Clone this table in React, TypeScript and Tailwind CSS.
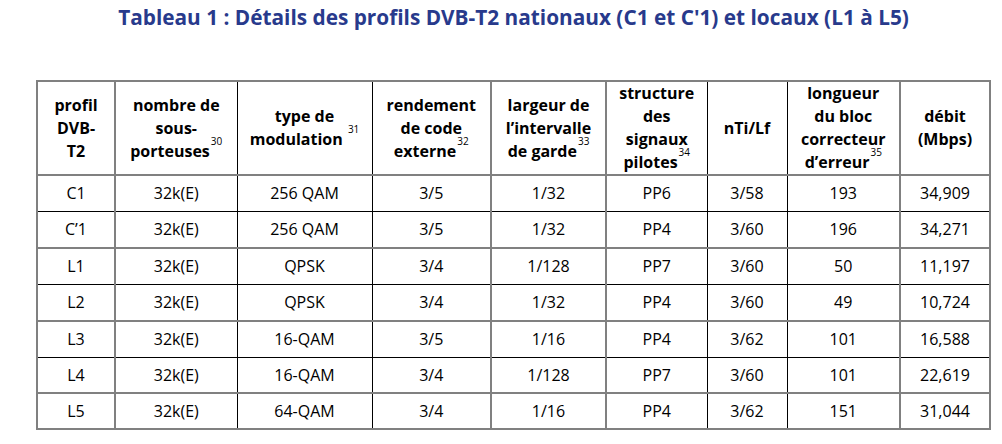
import React from "react";

type Row = string[];

const ROWS: Row[] = [
  ["C1", "32k(E)", "256 QAM", "3/5", "1/32", "PP6", "3/58", "193", "34,909"],
  ["C’1", "32k(E)", "256 QAM", "3/5", "1/32", "PP4", "3/60", "196", "34,271"],
  ["L1", "32k(E)", "QPSK", "3/4", "1/128", "PP7", "3/60", "50", "11,197"],
  ["L2", "32k(E)", "QPSK", "3/4", "1/32", "PP4", "3/60", "49", "10,724"],
  ["L3", "32k(E)", "16-QAM", "3/5", "1/16", "PP4", "3/62", "101", "16,588"],
  ["L4", "32k(E)", "16-QAM", "3/4", "1/128", "PP7", "3/60", "101", "22,619"],
  ["L5", "32k(E)", "64-QAM", "3/4", "1/16", "PP4", "3/62", "151", "31,044"],
];

// hauteur de chaque ligne (les lignes paires ont 1px de plus)
const HEIGHTS = ["h-[36px]", "h-[37px]", "h-[36px]", "h-[37px]", "h-[36px]", "h-[36px]", "h-[36px]"];

// bordures grises épaisses après ces colonnes, noires fines sinon
const RIGHT = [
  "border-r-2 border-r-[#808080]",
  "border-r border-r-black",
  "border-r border-r-black",
  "border-r-2 border-r-[#808080]",
  "border-r-2 border-r-[#808080]",
  "border-r border-r-black",
  "border-r border-r-black",
  "border-r-2 border-r-[#808080]",
  "border-r-2 border-r-[#808080]",
];

function Sup({ n }: { n: string }) {
  return <sup className="ml-[1px] align-[7px] text-[10px] font-normal leading-none">{n}</sup>;
}

const HEAD: React.ReactNode[] = [
  <>profil<br />DVB-<br />T2</>,
  <>nombre de<br />sous-<br />porteuses<Sup n="30" /></>,
  <>type de<br />modulation <Sup n="31" /></>,
  <>rendement<br />de code<br />externe<Sup n="32" /></>,
  <>largeur de<br />l’intervalle<br />de garde<Sup n="33" /></>,
  <>structure<br />des<br />signaux<br />pilotes<Sup n="34" /></>,
  <>nTi/Lf</>,
  <>longueur<br />du bloc<br />correcteur<br />d’erreur<Sup n="35" /></>,
  <>débit<br />(Mbps)</>,
];

export default function App() {
  return (
    <div className="h-[444px] w-[1002px] bg-white font-['Open_Sans',sans-serif] text-black">
      <h1 className="ml-[36px] w-[955px] whitespace-nowrap pt-[3px] text-center text-[20.8px] font-bold leading-[28px] text-[#283a8c]">
        Tableau 1 : Détails des profils DVB-T2 nationaux (C1 et C'1) et locaux (L1 à L5)
      </h1>

      <table className="ml-[36px] mt-[49px] w-[955px] table-fixed border-collapse border-2 border-[#808080] text-center text-[16px]">
        <colgroup>
          <col className="w-[78px]" />
          <col className="w-[122px]" />
          <col className="w-[135px]" />
          <col className="w-[119px]" />
          <col className="w-[115px]" />
          <col className="w-[101px]" />
          <col className="w-[80px]" />
          <col className="w-[113px]" />
          <col className="w-[90px]" />
        </colgroup>
        <thead>
          <tr className="h-[92px]">
            {HEAD.map((h, i) => (
              <th
                key={i}
                className={`border-b-2 border-b-[#808080] p-0 align-middle font-bold leading-[23px] ${RIGHT[i]}`}
              >
                {h}
              </th>
            ))}
          </tr>
        </thead>
        <tbody>
          {ROWS.map((row, r) => (
            <tr key={r} className={HEIGHTS[r]}>
              {row.map((cell, i) => (
                <td
                  key={i}
                  className={`p-0 align-middle leading-[22px] ${RIGHT[i]} ${
                    r % 2 === 1 ? "border-b-2 border-b-[#808080]" : "border-b border-b-black"
                  }`}
                >
                  {cell}
                </td>
              ))}
            </tr>
          ))}
        </tbody>
      </table>
    </div>
  );
}
